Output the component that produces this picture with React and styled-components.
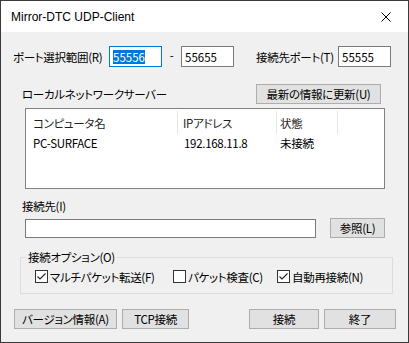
import styled, { createGlobalStyle } from "styled-components";

const GlobalStyle = createGlobalStyle`
  html, body {
    margin: 0;
    padding: 0;
    background: #ffffff;
  }
  body {
    font-family: "Noto Sans CJK JP", "Noto Sans", sans-serif;
    font-size: 11.5px;
    letter-spacing: -0.3px;
    color: #000000;
  }
`;

// outer window frame
const Window = styled.div`
  width: 409px;
  height: 343px;
  box-sizing: border-box;
  border: 1px solid #3a3a3a;
  display: flex;
  flex-direction: column;
  font-feature-settings: "palt";
`;

const TitleBar = styled.div`
  height: 31px;
  flex-shrink: 0;
  background: #ffffff;
  display: flex;
  align-items: center;
  justify-content: space-between;
  padding: 0 17px 0 10px;
`;

const Title = styled.span`
  font-family: "Liberation Sans", Arial, sans-serif;
  font-size: 12px;
  letter-spacing: 0;
  color: #000;
`;

const Body = styled.div`
  flex: 1;
  background: #f0f0f0;
  display: flex;
  flex-direction: column;
`;

const Row = styled.div`
  display: flex;
  align-items: ${(p) => p.$align || "center"};
  height: ${(p) => p.$h}px;
  margin-top: ${(p) => p.$mt || 0}px;
  padding-left: ${(p) => p.$pl || 0}px;
  padding-right: ${(p) => p.$pr || 0}px;
`;

const Label = styled.span`
  width: ${(p) => (p.$w ? `${p.$w}px` : "auto")};
  margin-left: ${(p) => p.$ml || 0}px;
  line-height: 14px;
  white-space: nowrap;
  flex-shrink: 0;
`;

const Dash = styled.span`
  width: 19px;
  text-align: center;
  line-height: 14px;
  margin-top: -3px;
`;

const TextBox = styled.div`
  width: ${(p) => p.$w}px;
  height: ${(p) => p.$h || 21}px;
  box-sizing: border-box;
  background: #ffffff;
  border: 1px solid ${(p) => (p.$focused ? "#0078d7" : "#7a7a7a")};
  display: flex;
  align-items: center;
  padding-left: 3px;
  flex-shrink: 0;
  letter-spacing: 0;
`;

const Selected = styled.span`
  background: #0078d7;
  color: #ffffff;
  line-height: 14px;
`;

const Button = styled.button`
  width: ${(p) => p.$w}px;
  height: 20px;
  box-sizing: border-box;
  margin: 0 0 0 ${(p) => p.$ml || 0}px;
  padding: 0;
  border: 1px solid #adadad;
  background: #e1e1e1;
  font: inherit;
  letter-spacing: inherit;
  color: #000;
  display: flex;
  align-items: center;
  justify-content: center;
  white-space: nowrap;
  flex-shrink: 0;
`;

const SectionHead = styled(Row)`
  justify-content: space-between;
`;

const ListBox = styled.div`
  width: 360px;
  height: 81px;
  box-sizing: border-box;
  margin: 4px 0 0 24px;
  border: 1px solid #828282;
  background: #ffffff;
`;

const ListRow = styled.div`
  display: flex;
  height: ${(p) => p.$h}px;
  padding-top: ${(p) => p.$pt || 0}px;
  box-sizing: border-box;
`;

const Cell = styled.div`
  width: ${(p) => p.$w}px;
  box-sizing: border-box;
  padding-left: ${(p) => p.$pl}px;
  display: flex;
  align-items: center;
  white-space: nowrap;
  border-right: ${(p) => (p.$sep ? "1px solid #e5e5e5" : "none")};
  color: ${(p) => (p.$head ? "#1e1e1e" : "#000")};
`;

const Group = styled.fieldset`
  width: 373px;
  box-sizing: border-box;
  margin: 12px 0 0 19px;
  padding: 0;
  border: 1px solid #dcdcdc;
  min-width: 0;
`;

const Legend = styled.legend`
  margin-left: 5px;
  padding: 0 2px;
  line-height: 14px;
`;

const CheckRow = styled.div`
  display: flex;
  align-items: center;
  padding: 6px 0 10px 14px;
`;

const CheckItem = styled.label`
  display: flex;
  align-items: center;
  width: ${(p) => (p.$w ? `${p.$w}px` : "auto")};
  height: 13px;
  white-space: nowrap;
`;

const Box = styled.span`
  width: 13px;
  height: 13px;
  box-sizing: border-box;
  border: 1px solid #333333;
  background: #ffffff;
  margin-right: 2px;
  display: flex;
  align-items: center;
  justify-content: center;
  flex-shrink: 0;
`;

const Spacer = styled.div`
  flex: 1;
`;

const CloseIcon = () => (
  <svg width="10" height="10" viewBox="0 0 10 10">
    <path d="M0.5 0.5 L9.5 9.5 M9.5 0.5 L0.5 9.5" stroke="#000" strokeWidth="1" fill="none" />
  </svg>
);

const Check = ({ checked, children, w }) => (
  <CheckItem $w={w}>
    <Box>
      {checked && (
        <svg width="11" height="11" viewBox="0 0 11 11">
          <path d="M1.5 5.5 L4 8 L9.5 2.5" stroke="#222" strokeWidth="1.1" fill="none" />
        </svg>
      )}
    </Box>
    <span>{children}</span>
  </CheckItem>
);

const columns = [
  { w: 152, pl: 7 },
  { w: 99, pl: 5 },
  { w: 61, pl: 3 },
];

const servers = [{ name: "PC-SURFACE", ip: "192.168.11.8", state: "未接続" }];

export default function App() {
  return (
    <>
      <GlobalStyle />
      <Window>
        <TitleBar>
          <Title>Mirror-DTC UDP-Client</Title>
          <CloseIcon />
        </TitleBar>
        <Body>
          <Row $h={21} $mt={14} $pl={12}>
            <Label $w={96}>ポート選択範囲(R)</Label>
            <TextBox $w={53} $focused>
              <Selected>55556</Selected>
            </TextBox>
            <Dash>-</Dash>
            <TextBox $w={53}>55655</TextBox>
            <Label $w={82} $ml={22}>接続先ポート(T)</Label>
            <TextBox $w={53}>55555</TextBox>
          </Row>

          <SectionHead $h={20} $mt={17} $pl={21} $pr={27}>
            <Label>ローカルネットワークサーバー</Label>
            <Button $w={125}>最新の情報に更新(U)</Button>
          </SectionHead>

          <ListBox>
            <ListRow $h={25} $pt={2}>
              {["コンピュータ名", "IPアドレス", "状態"].map((h, i) => (
                <Cell key={h} $w={columns[i].w} $pl={columns[i].pl} $sep $head>
                  {h}
                </Cell>
              ))}
            </ListRow>
            {servers.map((s) => (
              <ListRow key={s.name} $h={17}>
                <Cell $w={152} $pl={7}>{s.name}</Cell>
                <Cell $w={99} $pl={6}>{s.ip}</Cell>
                <Cell $w={61} $pl={3}>{s.state}</Cell>
              </ListRow>
            ))}
          </ListBox>

          <Row $h={14} $mt={10} $pl={21}>
            <Label>接続先(I)</Label>
          </Row>
          <Row $h={20} $mt={5} $pl={24} $align="flex-end">
            <TextBox $w={291} $h={19} />
            <Button $w={55} $ml={14}>参照(L)</Button>
          </Row>

          <Group>
            <Legend>接続オプション(O)</Legend>
            <CheckRow>
              <Check checked w={138}>マルチパケット転送(F)</Check>
              <Check w={104}>パケット検査(C)</Check>
              <Check checked>自動再接続(N)</Check>
            </CheckRow>
          </Group>

          <Row $h={20} $mt={15} $pl={13} $pr={12}>
            <Button $w={103}>バージョン情報(A)</Button>
            <Button $w={67} $ml={5}>TCP接続</Button>
            <Spacer />
            <Button $w={70}>接続</Button>
            <Button $w={72} $ml={5}>終了</Button>
          </Row>
        </Body>
      </Window>
    </>
  );
}
